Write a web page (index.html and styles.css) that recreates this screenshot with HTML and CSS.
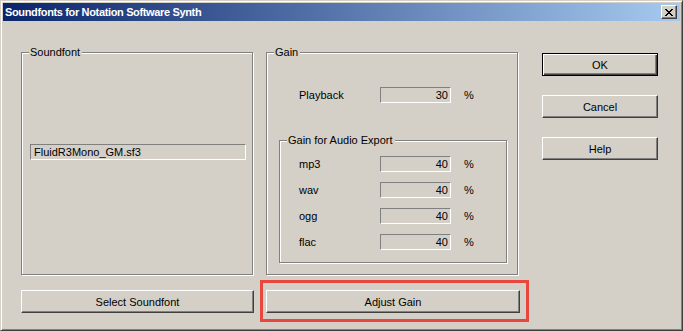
FILE: index.html
```html
<!DOCTYPE html>
<html>
<head>
<meta charset="utf-8">
<link rel="stylesheet" href="styles.css">
</head>
<body>
<div class="window">
  <div class="titlebar">
    <span class="title">Soundfonts for Notation Software Synth</span>
    <button class="close" aria-label="Close">
      <svg width="8" height="7" viewBox="0 0 8 7"><path d="M0 0h2v1h-2zM6 0h2v1h-2zM1 1h2v1h-2zM5 1h2v1h-2zM2 2h4v1h-4zM3 3h2v1h-2zM2 4h4v1h-4zM1 5h2v1h-2zM5 5h2v1h-2zM0 6h2v1h-2zM6 6h2v1h-2z" fill="#000"/></svg>
    </button>
  </div>
  <div class="content">
    <fieldset class="group sf-group">
      <legend>Soundfont</legend>
      <div class="field sf-field">FluidR3Mono_GM.sf3</div>
    </fieldset>
    <fieldset class="group gain-group">
      <legend>Gain</legend>
      <div class="row playback"><span class="lbl">Playback</span><span class="field num">30</span><span class="pct">%</span></div>
      <fieldset class="group export-group">
        <legend>Gain for Audio Export</legend>
        <div class="rows">
          <div class="row"><span class="lbl">mp3</span><span class="field num">40</span><span class="pct">%</span></div>
          <div class="row"><span class="lbl">wav</span><span class="field num">40</span><span class="pct">%</span></div>
          <div class="row"><span class="lbl">ogg</span><span class="field num">40</span><span class="pct">%</span></div>
          <div class="row"><span class="lbl">flac</span><span class="field num">40</span><span class="pct">%</span></div>
        </div>
      </fieldset>
    </fieldset>
    <div class="side">
      <button class="btn default">OK</button>
      <button class="btn">Cancel</button>
      <button class="btn">Help</button>
    </div>
    <button class="btn wide">Select Soundfont</button>
    <div class="highlight-wrap">
      <button class="btn wide">Adjust Gain</button>
      <span class="highlight"></span>
    </div>
  </div>
</div>
</body>
</html>
```
FILE: styles.css
```css
* { box-sizing: border-box; }
html, body { margin: 0; padding: 0; }
body {
  width: 683px;
  height: 331px;
  overflow: hidden;
  font-family: "Liberation Sans", Arial, sans-serif;
  font-size: 11px;
  color: #000;
  background: #d4d0c8;
}
.window {
  width: 683px;
  height: 331px;
  background: #d4d0c8;
  border: 1px solid;
  border-color: #d4d0c8 #404040 #404040 #d4d0c8;
  padding: 2px;
  box-shadow: inset 1px 1px 0 #fff, inset -1px -1px 0 #808080;
  display: flex;
  flex-direction: column;
}
.titlebar {
  height: 18px;
  background: linear-gradient(to right, #0a246a, #a6caf0);
  display: flex;
  align-items: center;
  justify-content: space-between;
  padding: 0 3px 0 2px;
}
.title {
  color: #fff;
  font-weight: bold;
  font-size: 11px;
  letter-spacing: -0.35px;
  line-height: 18px;
}
.close {
  width: 16px;
  height: 14px;
  padding: 0;
  margin: 0;
  background: #d4d0c8;
  border: 1px solid;
  border-color: #fff #404040 #404040 #fff;
  box-shadow: inset -1px -1px 0 #808080;
  display: flex;
  align-items: center;
  justify-content: center;
}
.close svg { display: block; margin-left: -1px; }
.content {
  flex: 1;
  display: grid;
  grid-template-columns: 233px 254px 126px;
  grid-template-rows: 230px 23px;
  column-gap: 12px;
  row-gap: 15px;
  padding: 24px 0 0 18px;
}
.group {
  margin: 0;
  padding: 0;
  border: 1px solid #808080;
  box-shadow: 1px 1px 0 #fff, inset 1px 1px 0 #fff;
  min-width: 0;
}
.group legend {
  margin-left: 7px;
  padding: 0 2px 0 1px;
  line-height: 14px;
  height: 14px;
  background: #d4d0c8;
}
.sf-group { width: 232px; }
.gain-group { width: 252px; }
.field {
  display: block;
  height: 16px;
  line-height: 14px;
  background: #d4d0c8;
  border: 1px solid;
  border-color: #808080 #fff #fff #808080;
  white-space: nowrap;
}
.sf-field {
  width: 216px;
  margin: 85px 0 0 8px;
  padding-left: 3px;
}
.num {
  width: 71px;
  text-align: right;
  padding-right: 2px;
}
.row {
  display: flex;
  align-items: center;
  height: 16px;
}
.lbl { width: 81px; }
.pct { margin-left: 13px; }
.playback { margin: 28px 0 0 32px; }
.export-group {
  width: 228px;
  height: 130px;
  margin: 30px 0 0 12px;
}
.rows {
  display: flex;
  flex-direction: column;
  gap: 10px;
  padding: 9px 0 0 19px;
}
.side {
  display: flex;
  flex-direction: column;
  gap: 19px;
  padding: 8px 0 0 10px;
}
.btn {
  font-family: "Liberation Sans", Arial, sans-serif;
  font-size: 11px;
  color: #000;
  height: 23px;
  width: 116px;
  margin: 0;
  padding: 0;
  background: #d4d0c8;
  border: 1px solid;
  border-color: #fff #404040 #404040 #fff;
  box-shadow: inset -1px -1px 0 #808080;
}
.btn.default {
  border: 1px solid #000;
  box-shadow: inset 1px 1px 0 #fff, inset -1px -1px 0 #404040, inset -2px -2px 0 #808080;
}
.btn.wide { width: 100%; }
.highlight-wrap { position: relative; }
.highlight {
  position: absolute;
  top: -10px;
  left: -6px;
  right: -9px;
  bottom: -9px;
  border: 3px solid #e8473e;
  pointer-events: none;
}
```
